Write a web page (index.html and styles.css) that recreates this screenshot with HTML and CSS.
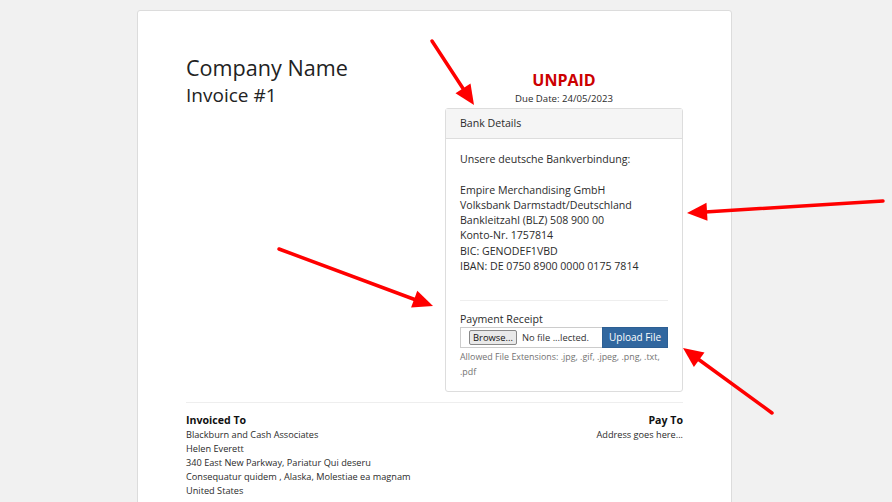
FILE: index.html
```html
<!DOCTYPE html>
<html lang="en">
<head>
    <meta charset="UTF-8">
    <meta name="viewport" content="width=device-width, initial-scale=1.0">
    <title>Invoice #1</title>
    <link rel="stylesheet" href="styles.css">
</head>
<body>
    <div class="invoice-container">
        <div class="invoice-header">
            <div class="invoice-brand">
                <h2 class="invoice-company">Company Name</h2>
                <h3 class="invoice-number">Invoice #1</h3>
            </div>
            <div class="invoice-status">
                <div class="status-unpaid">UNPAID</div>
                <div class="status-due">Due Date: 24/05/2023</div>

                <div class="panel">
                    <div class="panel-heading">Bank Details</div>
                    <div class="panel-body">
                        <p class="bank-text">
                            Unsere deutsche Bankverbindung:<br><br>
                            Empire Merchandising GmbH<br>
                            Volksbank Darmstadt/Deutschland<br>
                            Bankleitzahl (BLZ) 508 900 00<br>
                            Konto-Nr. 1757814<br>
                            BIC: GENODEF1VBD<br>
                            IBAN: DE 0750 8900 0000 0175 7814<br><br>
                        </p>
                        <hr class="panel-divider">
                        <label class="receipt-label">Payment Receipt</label>
                        <div class="upload-group">
                            <div class="file-field">
                                <span class="file-browse">Browse...</span>
                                <span class="file-name">No file ...lected.</span>
                            </div>
                            <button class="upload-button">Upload File</button>
                        </div>
                        <p class="upload-help">Allowed File Extensions: .jpg, .gif, .jpeg, .png, .txt, .pdf</p>
                    </div>
                </div>
            </div>
        </div>

        <hr class="invoice-divider">

        <div class="invoice-addresses">
            <div class="address-block">
                <strong>Invoiced To</strong>
                <address>
                    Blackburn and Cash Associates<br>
                    Helen Everett<br>
                    340 East New Parkway, Pariatur Qui deseru<br>
                    Consequatur quidem , Alaska, Molestiae ea magnam<br>
                    United States
                </address>
            </div>
            <div class="address-block address-right">
                <strong>Pay To</strong>
                <address>Address goes here...</address>
            </div>
        </div>
    </div>

    <!-- annotation arrows drawn over the page -->
    <svg class="annotations" width="892" height="502" viewBox="0 0 892 502">
        <g stroke="#f00" stroke-width="3.5" stroke-linecap="round" fill="none">
            <line x1="432" y1="41" x2="464" y2="90"></line>
            <line x1="883" y1="201" x2="705" y2="212"></line>
            <line x1="279" y1="249" x2="416" y2="300"></line>
            <line x1="772" y1="413" x2="698" y2="359"></line>
        </g>
        <g fill="#f00">
            <polygon points="474,105 455.5,93.2 470.5,83.4"></polygon>
            <polygon points="687,213 706.5,202.8 707.5,220.8"></polygon>
            <polygon points="433,306 411.1,307.5 417.3,290.7"></polygon>
            <polygon points="683,348 704.5,352.5 693.9,367.1"></polygon>
        </g>
    </svg>
</body>
</html>
```

FILE: styles.css
```css
body {
    font-family: 'Open Sans', 'Noto Sans', sans-serif;
    background-color: #f1f1f1;
    color: #2b2b2b;
    margin: 0;
    font-size: 10.6px;
    line-height: 15.3px;
}

.invoice-container {
    width: 497px;
    margin: 10px 0 0 137px;
    padding: 43px 48px 40px 48px;
    background-color: #fff;
    border: 1px solid #dcdcdc;
    border-radius: 3px;
    min-height: 600px;
}

.invoice-header {
    display: flex;
}

.invoice-brand {
    flex: 1;
}

.invoice-company {
    font-size: 21.6px;
    line-height: 28px;
    font-weight: normal;
    color: #222;
    margin: 0;
}

.invoice-number {
    font-size: 19px;
    line-height: 26px;
    font-weight: normal;
    color: #222;
    margin: 0;
}

.invoice-status {
    width: 238px;
    text-align: center;
    padding-top: 16px;
}

.status-unpaid {
    color: #cc0000;
    font-weight: bold;
    font-size: 16px;
    line-height: 20px;
}

.status-due {
    font-size: 9.6px;
    line-height: 15px;
    margin-top: 1px;
    margin-bottom: 2px;
}

.panel {
    text-align: left;
    border: 1px solid #ddd;
    border-radius: 3px;
}

.panel-heading {
    background-color: #f5f5f5;
    border-bottom: 1px solid #ddd;
    padding: 7px 14px;
    line-height: 15px;
}

.panel-body {
    padding: 13px 14px 12px 14px;
}

.bank-text {
    margin: 0;
}

.panel-divider {
    border: 0;
    border-top: 1px solid #eee;
    margin: 10px 0 11px 0;
}

.receipt-label {
    display: block;
}

.upload-group {
    display: flex;
    height: 21px;
}

.file-field {
    flex: 1;
    display: flex;
    align-items: center;
    border: 1px solid #ccc;
    border-right: none;
    padding-left: 8px;
    font-size: 9.4px;
}

.file-browse {
    border: 1px solid #888;
    border-radius: 2px;
    background-color: #e9e9e9;
    color: #111;
    padding: 0 3px;
    line-height: 13px;
    margin-right: 5px;
}

.file-name {
    color: #333;
}

.upload-button {
    width: 66px;
    border: 1px solid #2d5f93;
    background-color: #31679f;
    color: #fff;
    font-family: inherit;
    font-size: 10px;
    padding: 0;
    cursor: pointer;
}

.upload-help {
    color: #737373;
    font-size: 8.9px;
    line-height: 15px;
    margin: 1px 0 0 0;
}

.invoice-divider {
    border: 0;
    border-top: 1px solid #eee;
    margin: 10px 0 10px 0;
}

.invoice-addresses {
    display: flex;
    justify-content: space-between;
}

.address-block strong {
    display: block;
    font-size: 10.6px;
    line-height: 15px;
    color: #111;
}

.address-block address {
    font-style: normal;
    font-size: 9.2px;
    line-height: 14px;
}

.address-right {
    text-align: right;
}

.annotations {
    position: absolute;
    left: 0;
    top: 0;
    pointer-events: none;
}
```
